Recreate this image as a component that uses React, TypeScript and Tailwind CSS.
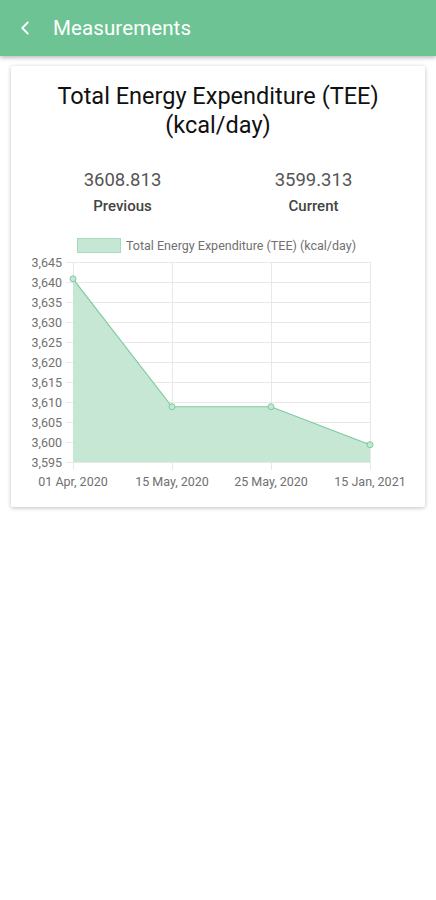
import { ChevronLeft } from 'lucide-react';

const yTicks = [3645, 3640, 3635, 3630, 3625, 3620, 3615, 3610, 3605, 3600, 3595];
const points = [
  { label: '01 Apr, 2020', value: 3640.8 },
  { label: '15 May, 2020', value: 3608.813 },
  { label: '25 May, 2020', value: 3608.813 },
  { label: '15 Jan, 2021', value: 3599.313 },
];

// chart geometry (svg coords)
const left = 46;
const step = 99;
const top = 32;
const unit = 4; // px per kcal
const bottom = top + (3645 - 3595) * unit;
const right = left + step * (points.length - 1);

const yOf = (v: number) => top + (3645 - v) * unit;

function EnergyChart() {
  const coords = points.map((p, i) => ({ x: left + i * step, y: yOf(p.value) }));
  const line = coords.map((c) => `${c.x},${c.y}`).join(' ');
  const area = `${left},${bottom} ${line} ${right},${bottom}`;

  return (
    <svg width="383" height="265" viewBox="0 0 383 265" className="block overflow-visible">
      {/* Legend */}
      <rect x="50.5" y="8.5" width="43" height="14" fill="#c5e7d4" stroke="#a5dbbd" strokeWidth="1" />
      <text x="99" y="19.5" fontSize="12.5" fill="#707070" fontFamily="Roboto, sans-serif">
        Total Energy Expenditure (TEE) (kcal/day)
      </text>

      {/* Horizontal grid + y labels */}
      {yTicks.map((t) => (
        <g key={t}>
          <line x1={left - 7} x2={right} y1={yOf(t) + 0.5} y2={yOf(t) + 0.5} stroke="#e8e8e8" strokeWidth="1" />
          <text x="35" y={yOf(t) + 4.5} fontSize="12.5" fill="#707070" textAnchor="end" fontFamily="Roboto, sans-serif">
            {t.toLocaleString('en-US')}
          </text>
        </g>
      ))}

      {/* Vertical grid + x labels */}
      {coords.map((c, i) => (
        <g key={i}>
          <line x1={c.x + 0.5} x2={c.x + 0.5} y1={top} y2={bottom + 8} stroke="#e8e8e8" strokeWidth="1" />
          <text x={c.x} y="255.5" fontSize="12.5" fill="#707070" textAnchor="middle" fontFamily="Roboto, sans-serif">
            {points[i].label}
          </text>
        </g>
      ))}

      {/* Area */}
      <polygon points={area} fill="#c5e7d4" />
      <polyline points={line} fill="none" stroke="#7fcaa2" strokeWidth="1.2" />
      {coords.map((c, i) => (
        <circle key={i} cx={c.x} cy={c.y} r="3" fill="#c5e7d4" stroke="#7fcaa2" strokeWidth="1" />
      ))}
    </svg>
  );
}

export default function App() {
  return (
    <div className="min-h-[900px] bg-white" style={{ fontFamily: 'Roboto, "Noto Sans", sans-serif' }}>
      {/* Header */}
      <div className="h-14 bg-[#6dc393] flex items-center shadow-[0_2px_4px_rgba(0,0,0,0.25)] relative">
        <ChevronLeft size={22} strokeWidth={2} className="text-white ml-[14px]" />
        <h1 className="ml-[17px] text-white text-[20.5px] tracking-[0.1px]">Measurements</h1>
      </div>

      {/* Card */}
      <div className="mx-[11px] mt-[10px] bg-white rounded-[2px] shadow-[0_1px_4px_rgba(0,0,0,0.25)] pt-4 pb-[12px]">
        <h2 className="text-center text-[23.5px] leading-[29px] text-[#111] px-2">
          Total Energy Expenditure (TEE)
          <br />
          (kcal/day)
        </h2>

        <div className="mt-[29px] grid grid-cols-2 px-4 text-center">
          <div>
            <div className="text-[18.5px] leading-[22px] text-[#555]">3608.813</div>
            <div className="mt-[5px] text-[15px] leading-[20px] font-medium text-[#444]">Previous</div>
          </div>
          <div>
            <div className="text-[18.5px] leading-[22px] text-[#555]">3599.313</div>
            <div className="mt-[5px] text-[15px] leading-[20px] font-medium text-[#444]">Current</div>
          </div>
        </div>

        <div className="mt-[14px] px-4">
          <EnergyChart />
        </div>
      </div>
    </div>
  );
}
